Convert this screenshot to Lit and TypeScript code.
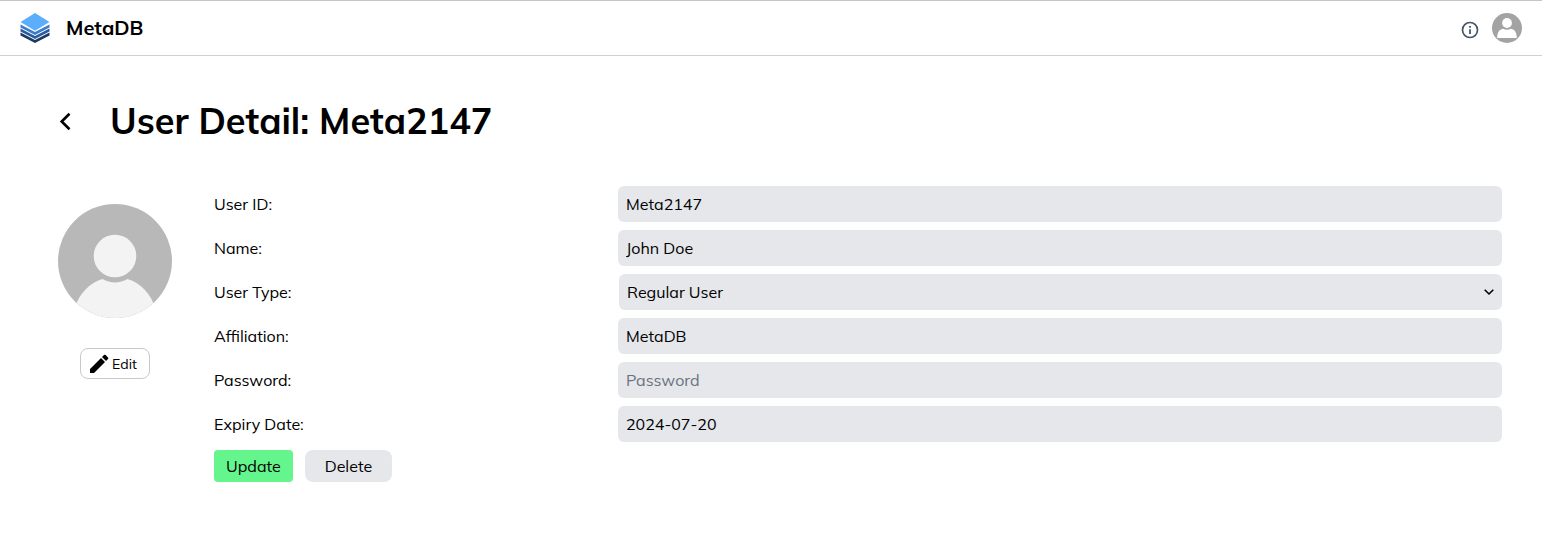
import { LitElement, html, css } from "lit";
import { customElement, state } from "lit/decorators.js";

interface UserRecord {
  id: string;
  name: string;
  type: string;
  affiliation: string;
  password: string;
  expiry: string;
}

@customElement("app-header")
class AppHeader extends LitElement {
  static styles = css`
    :host {
      display: block;
    }
    .bar {
      box-sizing: border-box;
      display: flex;
      align-items: center;
      height: 56px;
      padding: 0 20px;
      border-top: 1px solid #c4c4c4;
      border-bottom: 1px solid #d1d1d1;
      background: #fff;
    }
    .brand {
      display: flex;
      align-items: center;
      gap: 16px;
      color: #000;
      font-size: 20px;
      line-height: 28px;
      font-weight: 700;
      text-decoration: none;
    }
    .actions {
      display: flex;
      align-items: center;
      gap: 12px;
      margin-left: auto;
    }
    .icon-button {
      display: block;
      padding: 0;
      border: 0;
      background: none;
      cursor: pointer;
    }
    .info {
      padding-top: 4px;
    }
    svg {
      display: block;
    }
  `;

  render() {
    return html`
      <header class="bar">
        <a class="brand" href="#">
          <svg width="30" height="32" viewBox="0 0 30 32" aria-hidden="true">
            <path d="M.5 20.600L15 28l14.500-7.400v2.800L15 31 .5 23.400z" fill="#1b3a63" />
            <path d="M.5 16.600L15 24l14.500-7.400v2.800L15 27 .5 19.400z" fill="#2a5c9f" />
            <path d="M.5 12.600L15 20l14.500-7.400v2.800L15 23 .5 15.400z" fill="#3a7cca" />
            <path d="M.5 10L15 1l14.500 9L15 18.800z" fill="#5aaefb" />
          </svg>
          MetaDB
        </a>
        <div class="actions">
          <button class="icon-button info" type="button" aria-label="Information">
            <svg width="20" height="20" viewBox="0 0 20 20" fill="none">
              <circle cx="10" cy="10" r="7.500" stroke="#475569" stroke-width="1.700" />
              <path d="M10 9.200v4.800M10 6v1.800" stroke="#475569" stroke-width="1.800" />
            </svg>
          </button>
          <button class="icon-button" type="button" aria-label="Account">
            <svg width="30" height="30" viewBox="0 0 30 30">
              <circle cx="15" cy="15" r="15" fill="#a3a3a3" />
              <circle cx="15" cy="10" r="4.900" fill="#fff" />
              <path d="M5.200 25c0-5.500 1.800-8.500 5.800-9.300 1.200.7 2.500 1 4 1s2.800-.3 4-1c4 .8 5.800 3.800 5.800 9.300z" fill="#fff" />
            </svg>
          </button>
        </div>
      </header>
    `;
  }
}

@customElement("app-root")
class AppRoot extends LitElement {
  @state() private user: UserRecord = {
    id: "Meta2147",
    name: "John Doe",
    type: "Regular User",
    affiliation: "MetaDB",
    password: "",
    expiry: "2024-07-20",
  };

  static styles = css`
    :host {
      display: block;
      font-family: Mulish, Muli, "Open Sans", "Noto Sans", sans-serif;
      font-size: 16px;
      line-height: 24px;
      color: #000;
    }
    svg {
      display: block;
    }
    .page {
      padding: 40px;
    }
    .heading {
      display: flex;
      align-items: center;
      gap: 32px;
      padding: 0 14px;
    }
    .back {
      display: block;
      padding: 0 4px;
    }
    h1 {
      margin: 0;
      font-size: 36px;
      line-height: 50px;
      font-weight: 700;
    }
    .content {
      display: grid;
      grid-template-columns: 150px minmax(0, 1fr);
      gap: 24px;
      margin-top: 40px;
    }
    .profile {
      display: flex;
      flex-direction: column;
      align-items: center;
      gap: 30px;
      padding-top: 18px;
    }
    .rows {
      display: grid;
      gap: 8px;
    }
    .row {
      display: grid;
      grid-template-columns: minmax(0, 99fr) minmax(0, 221fr);
      gap: 8px;
      align-items: center;
    }
    .field {
      box-sizing: border-box;
      width: 100%;
      height: 36px;
      margin: 0;
      padding: 6px 8px;
      border: 0;
      border-radius: 6px;
      background: #e5e7eb;
      color: #000;
      font: inherit;
    }
    .field::placeholder {
      color: #6b7280;
      opacity: 1;
    }
    .picker {
      position: relative;
      display: flex;
      padding-left: 1px;
    }
    .picker .field {
      appearance: none;
      padding-right: 32px;
    }
    .chevron {
      position: absolute;
      right: 8px;
      top: 13px;
      pointer-events: none;
    }
    .buttons {
      display: flex;
      gap: 12px;
      margin-top: 8px;
    }
    .button {
      height: 32px;
      padding: 0 12px;
      border: 0;
      border-radius: 4px;
      background: #64f58d;
      color: #000;
      font: inherit;
      cursor: pointer;
    }
    .button.delete {
      padding: 0 20px;
      border-radius: 8px;
      background: #e5e7eb;
    }
    .edit {
      display: flex;
      align-items: center;
      gap: 2px;
      padding: 5px 12px 4px 8px;
      border: 1px solid #c9c9c9;
      border-radius: 8px;
      background: #fff;
      color: #000;
      font: inherit;
      font-size: 14px;
      line-height: 20px;
      cursor: pointer;
    }
  `;

  private setValue(key: keyof UserRecord, e: Event) {
    this.user = { ...this.user, [key]: (e.target as HTMLInputElement).value };
  }

  private textRow(label: string, key: keyof UserRecord, type = "text", placeholder = "") {
    return html`
      <div class="row">
        <label for=${key}>${label}</label>
        <input
          class="field"
          id=${key}
          type=${type}
          placeholder=${placeholder}
          .value=${this.user[key]}
          @input=${(e: Event) => this.setValue(key, e)}
        />
      </div>
    `;
  }

  render() {
    return html`
      <app-header></app-header>
      <main class="page">
        <div class="heading">
          <a class="back" href="#" aria-label="Back">
            <svg width="16" height="20" viewBox="0 0 16 20" fill="none">
              <path d="M11.500 2.800L3.700 10.500l7.800 7.700" stroke="#000" stroke-width="2.600" />
            </svg>
          </a>
          <h1>User Detail: ${this.user.id}</h1>
        </div>
        <div class="content">
          <div class="profile">
            <svg width="114" height="114" viewBox="0 0 114 114" role="img" aria-label="Profile picture">
              <clipPath id="disc"><circle cx="57" cy="57" r="57" /></clipPath>
              <g clip-path="url(#disc)">
                <rect width="114" height="114" fill="#b8b8b8" />
                <circle cx="57" cy="52" r="21.300" fill="#f3f3f3" />
                <path d="M18 101c3-10 13-22 26.500-26 8 4.500 17 4.500 25 0 13.500 4 23.500 16 26.500 26v14H18z" fill="#f3f3f3" />
              </g>
            </svg>
            <button class="edit" type="button">
              <svg width="21" height="20" viewBox="0 0 21 20" aria-hidden="true">
                <path d="M1 19v-4L12 4l4 4L5 19zM13 3L15 1c.5-.5 1.100-.5 1.600 0l2.400 2.400c.5.5.5 1.100 0 1.600L17 7z" />
              </svg>
              Edit
            </button>
          </div>
          <form @submit=${(e: Event) => e.preventDefault()}>
            <div class="rows">
              ${this.textRow("User ID:", "id")}
              ${this.textRow("Name:", "name")}
              <div class="row">
                <label for="type">User Type:</label>
                <div class="picker">
                  <select class="field" id="type" @change=${(e: Event) => this.setValue("type", e)}>
                    <option selected>Regular User</option>
                    <option>Admin</option>
                  </select>
                  <svg class="chevron" width="10" height="10" viewBox="0 0 10 10" fill="none" aria-hidden="true">
                    <path d="M.7 2.800L5 7l4.300-4.200" stroke="#000" stroke-width="1.600" />
                  </svg>
                </div>
              </div>
              ${this.textRow("Affiliation:", "affiliation")}
              ${this.textRow("Password:", "password", "password", "Password")}
              ${this.textRow("Expiry Date:", "expiry")}
            </div>
            <div class="buttons">
              <button class="button" type="submit">Update</button>
              <button class="button delete" type="button">Delete</button>
            </div>
          </form>
        </div>
      </main>
    `;
  }
}
